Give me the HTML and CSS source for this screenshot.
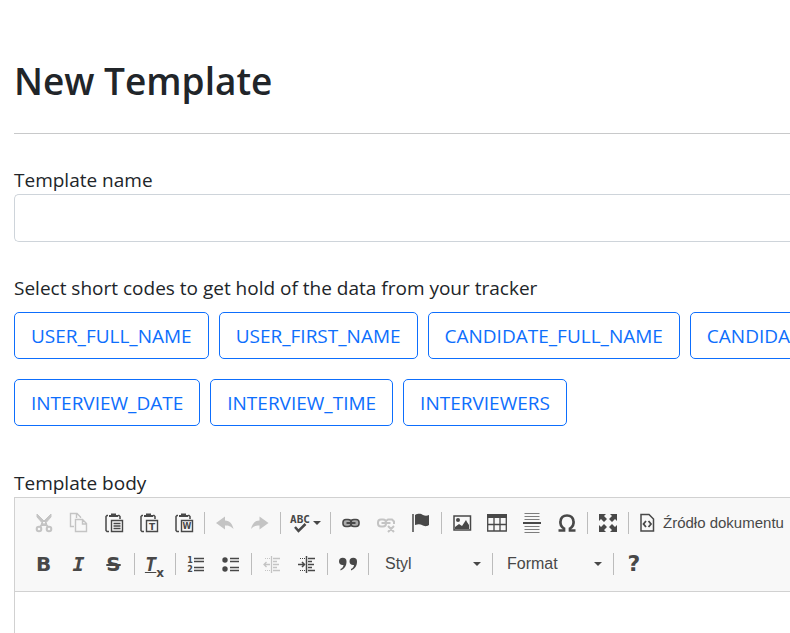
FILE: index.html
```
<!DOCTYPE html>
<html lang="en">
<head>
<meta charset="utf-8">
<meta name="viewport" content="width=device-width, initial-scale=1">
<title>New Template</title>
<link rel="stylesheet" href="styles.css">
</head>
<body>
<main class="page">
  <h1 class="title">New Template</h1>
  <hr class="rule">
  <form class="form">
    <div class="field">
      <label class="label" for="template-name">Template name</label>
      <input class="input" id="template-name" type="text">
    </div>
    <div class="field codes">
      <p class="label">Select short codes to get hold of the data from your tracker</p>
      <div class="code-row">
        <button class="code" type="button">USER_FULL_NAME</button>
        <button class="code" type="button">USER_FIRST_NAME</button>
        <button class="code" type="button">CANDIDATE_FULL_NAME</button>
        <button class="code" type="button">CANDIDATE_FIRST_NAME</button>
      </div>
      <div class="code-row">
        <button class="code" type="button">INTERVIEW_DATE</button>
        <button class="code" type="button">INTERVIEW_TIME</button>
        <button class="code" type="button">INTERVIEWERS</button>
      </div>
    </div>
    <div class="field field-body">
      <label class="label" for="template-body">Template body</label>
      <div class="editor">
        <div class="toolbar" role="toolbar">
          <div class="tool-row">
            <button class="tool off" type="button" aria-label="Cut"><svg viewBox="0 0 20 20"><path d="M3 1v3l8 9 2-2zM17 1v3l-8 9-2-2z" fill="currentColor"/><path d="M9 10l-3 4M11 10l3 4" stroke-width="2"/><circle cx="5" cy="16" r="2.3" stroke-width="2"/><circle cx="15" cy="16" r="2.3" stroke-width="2"/></svg></button>
            <button class="tool off" type="button" aria-label="Copy"><svg viewBox="0 0 20 20"><path d="M5 13.500H1.500v-13H8L11.500 4v1M7.500 1v4M6.500 6.500h7l4 4v8h-11zM13.500 7v4h4" stroke-width="1.400"/></svg></button>
            <button class="tool" type="button" aria-label="Paste"><svg viewBox="0 0 20 20"><path d="M4 2.500H3l-1 1v14l1 1h2M14 2.500h1l1 1V6" stroke-width="1.500"/><path d="M5 4V2h2V.500h5V2h2v2z" fill="currentColor" stroke="none"/><path d="M7.500 7.500h11v11h-11zM9.500 10.500h7M9.500 13h7M9.500 15.500h7" stroke-width="1.400"/></svg></button>
            <button class="tool" type="button" aria-label="Paste as plain text"><svg viewBox="0 0 20 20"><path d="M4 2.500H3l-1 1v14l1 1h2M14 2.500h1l1 1V6" stroke-width="1.500"/><path d="M5 4V2h2V.500h5V2h2v2z" fill="currentColor" stroke="none"/><path d="M7.500 7.500h11v11h-11z" stroke-width="1.400"/><text class="mark" x="13" y="16.500">T</text></svg></button>
            <button class="tool" type="button" aria-label="Paste from Word"><svg viewBox="0 0 20 20"><path d="M4 2.500H3l-1 1v14l1 1h2M14 2.500h1l1 1V6" stroke-width="1.500"/><path d="M5 4V2h2V.500h5V2h2v2z" fill="currentColor" stroke="none"/><path d="M7.500 7.500h11v11h-11z" stroke-width="1.400"/><text class="mark mark-w" x="13" y="16">W</text></svg></button>
            <span class="sep"></span>
            <button class="tool off" type="button" aria-label="Undo"><svg viewBox="0 0 20 20"><path d="M1 10l9-6.500V7.500c5 0 7.500 4 8.500 8.500-3-3-5-3.500-8.500-3.500v4z" fill="currentColor" stroke="none"/></svg></button>
            <button class="tool off" type="button" aria-label="Redo"><svg viewBox="0 0 20 20"><path d="M18.500 10l-9-6.500V7.500C4.500 7.500 2 11.500 1 16c3-3 5-3.500 8.500-3.500v4z" fill="currentColor" stroke="none"/></svg></button>
            <span class="sep"></span>
            <button class="tool spell" type="button" aria-label="Spell check"><svg viewBox="0 0 20 20"><text class="abc" x="10" y="10">ABC</text><path d="M5 14l3.500 4 7-7" stroke-width="2.500"/></svg><span class="caret"></span></button>
            <span class="sep"></span>
            <button class="tool" type="button" aria-label="Link"><svg viewBox="0 0 20 20"><rect x="1.500" y="6" width="17" height="8" rx="4" fill="#aaa" stroke="none"/><rect x="2" y="6.500" width="8" height="7" rx="3" stroke-width="1.500"/><rect x="10" y="6.500" width="8" height="7" rx="3" stroke-width="1.500"/><path d="M5.500 10h9" stroke-width="2"/></svg></button>
            <button class="tool off" type="button" aria-label="Unlink"><svg viewBox="0 0 20 20"><rect x="2" y="6.500" width="8" height="7" rx="3" stroke-width="2"/><path d="M10 8l2-1.500h4l2 2V11M5.500 10h9M12 13l6 6M18 13l-6 6" stroke-width="2"/></svg></button>
            <button class="tool" type="button" aria-label="Anchor"><svg viewBox="0 0 20 20"><path d="M2 1v18" stroke-width="1.500"/><path d="M4 2c4-2 6-1 8 0s4 1 6 0v10c-3 2-5 1-7 0s-4-1-7 0z" fill="currentColor" stroke="none"/></svg></button>
            <span class="sep"></span>
            <button class="tool" type="button" aria-label="Image"><svg viewBox="0 0 20 20"><path d="M2 3h16.500v14H2z" stroke-width="1.500"/><circle cx="6" cy="7" r="2" fill="currentColor" stroke="none"/><path d="M3 16v-2l4-3 3 2 4-6 1 2 2 3v4z" fill="currentColor" stroke="none"/></svg></button>
            <button class="tool" type="button" aria-label="Table"><svg viewBox="0 0 20 20"><path d="M0 1h20v4H0z" fill="currentColor" stroke="none"/><path d="M.700 4v14h18.600V4M1 11.500h18M7 5v13M13 5v13" stroke-width="1.300"/></svg></button>
            <button class="tool" type="button" aria-label="Horizontal line"><svg viewBox="0 0 20 20"><path d="M2.500.500h15M2.500 3.500h15M2.500 6.500h15M2.500 13.500h15M2.500 16.500h15M2.500 19.500h15" opacity=".7"/><path d="M1 10h18" stroke-width="2"/></svg></button>
            <button class="tool" type="button" aria-label="Special character"><svg viewBox="0 0 20 20"><path d="M1.500 17.500H7v-2C4 13.500 3 11 3.500 8 4 4.500 6.500 2.500 10 2.500s6 2 6.500 5.500c.500 3-.500 5.500-3.500 7.500v2h5.500" stroke-width="2.700"/></svg></button>
            <span class="sep"></span>
            <button class="tool" type="button" aria-label="Maximize"><svg viewBox="0 0 20 20"><path d="M1 1h7L6 3l3 3-3 3-3-3-2 2zM19 1h-7l2 2-3 3 3 3 3-3 2 2zM1 19h7l-2-2 3-3-3-3-3 3-2-2zM19 19h-7l2-2-3-3 3-3 3 3 2-2z" fill="currentColor" stroke="none"/></svg></button>
            <span class="sep"></span>
            <button class="tool source" type="button"><svg viewBox="0 0 20 20"><path d="M4 1.500h8l4.500 4.500v12H4z" stroke-width="1.500"/><path d="M9 8l-2.500 3L9 14M11.500 8l2.500 3-2.500 3" stroke-width="1.800"/></svg>Źródło dokumentu</button>
          </div>
          <div class="tool-row">
            <button class="tool letter" type="button">B</button>
            <button class="tool letter italic" type="button">I</button>
            <button class="tool letter strike" type="button">S</button>
            <span class="sep"></span>
            <button class="tool letter clear" type="button"><span class="clear-t">T</span><sub>x</sub></button>
            <span class="sep"></span>
            <button class="tool" type="button" aria-label="Numbered list"><svg viewBox="0 0 20 20"><path d="M8 4.500h10M8 7.500h10M8 13.500h10M8 16.500h10" stroke-width="1.300"/><text class="digit" x="4" y="9">1</text><text class="digit" x="4" y="18">2</text></svg></button>
            <button class="tool" type="button" aria-label="Bulleted list"><svg viewBox="0 0 20 20"><circle cx="4" cy="6" r="2.700" fill="currentColor" stroke="none"/><circle cx="4" cy="15" r="2.700" fill="currentColor" stroke="none"/><path d="M9 4.500h9M9 7.500h9M9 13.500h9M9 16.500h9" stroke-width="1.300"/></svg></button>
            <span class="sep"></span>
            <button class="tool off" type="button" aria-label="Decrease indent"><svg viewBox="0 0 20 20"><path d="M9.500 2v17M11 4.500h7M11 7.500h4M11 10.500h6M11 13.500h4M11 16.500h7" stroke-width="1.300"/><path d="M3 4.500h5M3 16.500h5" stroke-dasharray="1 1"/><path d="M2 10.500h6M4.500 8L2 10.500 4.500 13" stroke-width="1.300"/></svg></button>
            <button class="tool" type="button" aria-label="Increase indent"><svg viewBox="0 0 20 20"><path d="M9.500 2v17M11 4.500h7M11 7.500h4M11 10.500h6M11 13.500h4M11 16.500h7" stroke-width="1.500"/><path d="M3 4.500h5M3 16.500h5" stroke-dasharray="1 1"/><path d="M1 10.500h6M5 8l2.500 2.500L5 13" stroke-width="1.500"/></svg></button>
            <span class="sep"></span>
            <button class="tool" type="button" aria-label="Block quote"><svg viewBox="0 0 20 20"><path d="M1 7.500a3.700 3.700 0 0 1 7.500 0c0 4-2 7.500-6 9v-1.500c2-1 3-2.500 3-4C3 11.500 1 10 1 7.500zM11.500 7.500a3.700 3.700 0 0 1 7.500 0c0 4-2 7.500-6 9v-1.500c2-1 3-2.500 3-4-2.500.500-4.500-1-4.500-3.500z" fill="currentColor" stroke="none"/></svg></button>
            <span class="sep"></span>
            <span class="combo combo-style"><select aria-label="Styl"><option>Styl</option></select><span class="caret"></span></span>
            <span class="sep"></span>
            <span class="combo"><select aria-label="Format"><option>Format</option></select><span class="caret"></span></span>
            <span class="sep"></span>
            <button class="tool letter help" type="button">?</button>
          </div>
        </div>
        <textarea class="body-text" id="template-body"></textarea>
      </div>
    </div>
  </form>
</main>
</body>
</html>
```
FILE: styles.css
```
* {
  box-sizing: border-box;
}

body {
  margin: 0;
  overflow-x: hidden;
  background: #fff;
  color: #212529;
  font: 19px/29px "Open Sans", "Noto Sans", sans-serif;
}

.page {
  display: flex;
  flex-direction: column;
  min-height: 100vh;
  padding: 57px 0 0 14px;
}

.title {
  margin: 0;
  font-size: 37px;
  font-weight: 600;
  line-height: 48px;
}

.rule {
  width: 100%;
  height: 1px;
  margin: 28px 0 32px;
  border: 0;
  background: #c8c9ca;
}

.form {
  display: flex;
  flex: 1;
  flex-direction: column;
  gap: 32px;
}

.field {
  display: flex;
  flex-direction: column;
}

.field-body {
  flex: 1;
}

.label {
  margin: 0;
  line-height: 28px;
}

.input {
  width: 100%;
  height: 48px;
  padding: 8px 16px;
  border: 1px solid #ced4da;
  border-right: 0;
  border-radius: 5px 0 0 5px;
  font: inherit;
}

.codes {
  gap: 20px;
  padding-bottom: 11px;
}

.codes .label {
  margin-bottom: -10px;
}

.code-row {
  display: flex;
  gap: 10px;
  overflow: hidden;
}

.code {
  flex: none;
  padding: 9px 16px 7px;
  border: 1px solid #0d6efd;
  border-radius: 5px;
  background: #fff;
  color: #0d6efd;
  font: inherit;
  white-space: nowrap;
}

.editor {
  display: flex;
  flex: 1;
  flex-direction: column;
  border: 1px solid #d1d1d1;
  border-width: 1px 0 0 1px;
}

.toolbar {
  padding: 4px 0 7px 11px;
  border-bottom: 1px solid #d1d1d1;
  background: #f8f8f8;
}

.tool-row {
  display: flex;
  align-items: center;
  height: 41px;
}

.tool {
  display: flex;
  flex: none;
  align-items: center;
  justify-content: center;
  width: 35px;
  height: 35px;
  padding: 0;
  border: 0;
  background: none;
  color: #484848;
  font: 15px/20px "Liberation Sans", sans-serif;
}

.tool svg {
  flex: none;
  width: 20px;
  height: 20px;
  overflow: visible;
  fill: none;
  stroke: currentColor;
}

.tool text {
  fill: currentColor;
  stroke: none;
  text-anchor: middle;
  font-family: "DejaVu Sans", sans-serif;
  font-weight: bold;
}

.tool .mark {
  font-size: 9px;
}

.tool .mark-w {
  font-size: 8px;
}

.tool .abc {
  font-family: "DejaVu Sans Mono", monospace;
  font-size: 11px;
}

.tool .digit {
  font-size: 8px;
}

.tool.off {
  color: #c4c4c4;
}

.sep {
  flex: none;
  width: 1px;
  height: 22px;
  margin: 0 2px 0 3px;
  background: #bcbcbc;
}

.caret {
  border: 4px solid transparent;
  border-top-color: #484848;
  border-bottom: 0;
}

.spell {
  gap: 3px;
  width: 44px;
}

.source {
  gap: 6px;
  width: auto;
  padding: 0 6px;
  white-space: nowrap;
}

.letter {
  font: bold 20px/24px "DejaVu Sans", sans-serif;
}

.italic {
  font-family: "DejaVu Sans Mono", monospace;
  font-style: italic;
}

.strike {
  text-decoration: line-through;
}

.clear {
  font-size: 19px;
}

.clear-t {
  font-family: "DejaVu Sans Mono", monospace;
  font-style: italic;
  text-decoration: underline;
}

.clear sub {
  align-self: flex-end;
  font-size: 12px;
  line-height: 16px;
}

.help {
  width: 36px;
  font-size: 22px;
}

.combo {
  display: flex;
  flex: none;
  align-items: center;
  width: 115px;
  padding: 0 8px 0 12px;
}

.combo-style {
  width: 118px;
  padding-left: 14px;
}

.combo select {
  flex: 1;
  min-width: 0;
  padding: 0;
  border: 0;
  appearance: none;
  background: none;
  color: #484848;
  font: 16px/20px "Liberation Sans", sans-serif;
}

.body-text {
  display: block;
  flex: 1;
  width: 100%;
  min-height: 32px;
  padding: 0 20px;
  border: 0;
  resize: none;
  font: inherit;
}
```
